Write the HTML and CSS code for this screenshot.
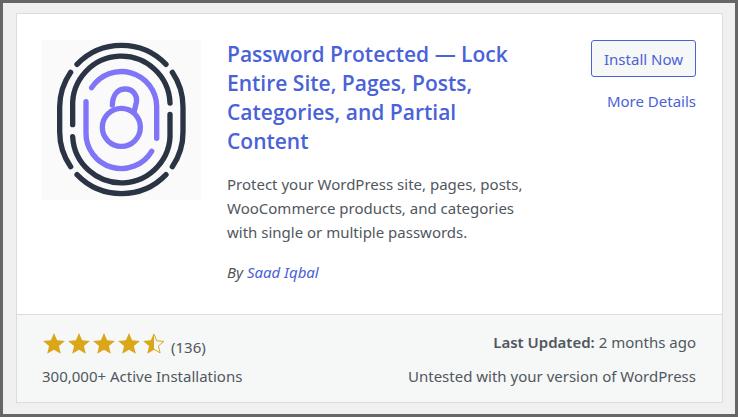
FILE: index.html
```html
<!DOCTYPE html>
<html lang="en">
<head>
    <meta charset="UTF-8">
    <meta name="viewport" content="width=device-width, initial-scale=1.0">
    <title>Add Plugins</title>
    <link rel="stylesheet" href="styles.css">
</head>
<body>
    <svg class="sprite" aria-hidden="true">
        <symbol id="star" viewBox="0 0 24 24">
            <path d="M12 1l3.100 7.300 7.800.6-6 5.200 1.900 7.700-6.800-4.100-6.800 4.100 1.900-7.700-6-5.200 7.800-.6z"/>
        </symbol>
    </svg>
    <main class="plugin-card">
        <div class="plugin-card-top">
            <svg class="plugin-icon" viewBox="20 17 477 480" role="img" aria-label="Password Protected">
                <rect x="20" y="17" width="477" height="480" fill="#fafafa"/>
                <g class="ridges">
                    <path d="M125 90A185 185 0 0 1 392 90"/>
                    <path d="M106 114A185 185 0 0 0 73 218V292A185 185 0 0 0 106 397"/>
                    <path d="M411 114A185 185 0 0 1 443 218V292A185 185 0 0 1 411 397"/>
                    <path d="M125 421A185 185 0 0 0 392 421"/>
                    <path d="M112 271V217A146 146 0 0 1 404 206"/>
                    <path d="M404 240V292A146 146 0 0 1 112 307"/>
                </g>
                <g class="lock">
                    <path d="M169 160A106 106 0 0 1 364 215V312"/>
                    <path d="M152 202V294A106 106 0 0 0 349 351"/>
                    <circle cx="258" cy="279" r="57"/>
                    <path d="M231 212C232 183 246 164 270 164C293 164 307 183 303 204L297 230"/>
                </g>
            </svg>
            <div class="plugin-info">
                <h3><a href="#">Password Protected — Lock Entire Site, Pages, Posts, Categories, and Partial Content</a></h3>
                <p>Protect your WordPress site, pages, posts, WooCommerce products, and categories with single or multiple passwords.</p>
                <p class="authors">By <a href="#">Saad Iqbal</a></p>
            </div>
            <div class="action-links">
                <button type="button" class="install-now">Install Now</button>
                <a href="#">More Details</a>
            </div>
        </div>
        <div class="plugin-card-bottom">
            <div class="column">
                <div class="rating">
                    <div class="stars" role="img" aria-label="4.5 out of 5 stars">
                        <svg class="star"><use href="#star"/></svg>
                        <svg class="star"><use href="#star"/></svg>
                        <svg class="star"><use href="#star"/></svg>
                        <svg class="star"><use href="#star"/></svg>
                        <svg class="star" viewBox="0 0 24 24">
                            <path d="M12 1v16.700l-6.800 4.100 1.900-7.700-6-5.200 7.800-.6z"/>
                            <path class="outline" d="M12 2.200l2.800 6.600 7 .6-5.400 4.600 1.700 6.900-6.100-3.700"/>
                        </svg>
                    </div>
                    <span class="num-ratings">(136)</span>
                </div>
                <div>300,000+ Active Installations</div>
            </div>
            <div class="column column-right">
                <div class="updated"><strong>Last Updated:</strong> 2 months ago</div>
                <div>Untested with your version of WordPress</div>
            </div>
        </div>
    </main>
</body>
</html>
```
FILE: styles.css
```css
* {
    box-sizing: border-box;
}
body {
    margin: 0;
    min-height: 100vh;
    padding: 10px 12px 11px 13px;
    border: 3px solid #666;
    background-color: #f0f0f0;
    color: #50575e;
    font-family: "Noto Sans", "Open Sans", sans-serif;
    font-size: 15px;
    line-height: 24px;
}
a {
    color: #4a62d8;
    text-decoration: none;
}
.sprite {
    display: none;
}
.plugin-card {
    background-color: #fff;
    border: 1px solid #dcdcde;
}
.plugin-card-top {
    display: flex;
    align-items: flex-start;
    padding: 26px 26px 30px 25px;
}
.plugin-icon {
    flex: none;
    width: 159px;
    height: 160px;
    margin-right: 26px;
    fill: none;
    stroke-width: 16;
    stroke-linecap: round;
}
.ridges {
    stroke: #2a3444;
}
.lock {
    stroke: #8075f6;
}
.plugin-info {
    flex: 1;
    max-width: 308px;
}
h3 {
    margin: 0 0 16px;
    font-family: "Open Sans", "Noto Sans", sans-serif;
    font-size: 21px;
    font-weight: 600;
    line-height: 29px;
}
p {
    margin: 0 0 16px;
}
.authors {
    margin: 0;
    font-style: italic;
}
.action-links {
    display: flex;
    flex-direction: column;
    align-items: flex-end;
    gap: 12px;
    margin-left: auto;
}
.install-now {
    height: 37px;
    padding: 0 12px;
    background-color: #f6f7f7;
    border: 1px solid #4a62d8;
    border-radius: 3px;
    color: #4a62d8;
    font: inherit;
    cursor: pointer;
}
.plugin-card-bottom {
    display: flex;
    justify-content: space-between;
    padding: 15px 26px 14px 25px;
    background-color: #f6f7f7;
    border-top: 1px solid #dcdcde;
}
.column {
    display: flex;
    flex-direction: column;
    gap: 5px;
}
.column-right {
    text-align: right;
}
.rating {
    display: flex;
    align-items: flex-end;
    gap: 5px;
    height: 29px;
}
.stars {
    display: flex;
    gap: 1px;
    padding-bottom: 3px;
}
.star {
    width: 24px;
    height: 24px;
    fill: #dba617;
}
.outline {
    fill: none;
    stroke: #dba617;
    stroke-width: 1;
}
.updated {
    height: 29px;
}
strong {
    font-weight: 600;
}
```
